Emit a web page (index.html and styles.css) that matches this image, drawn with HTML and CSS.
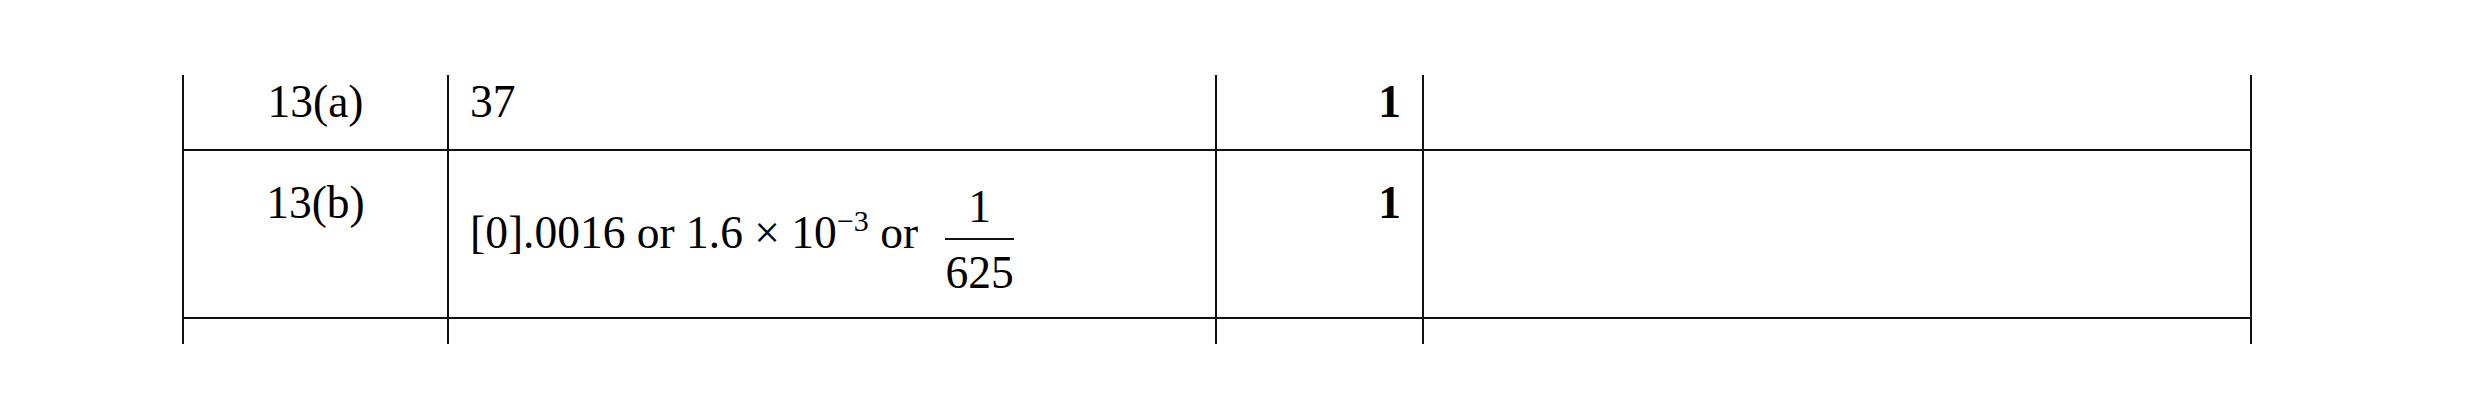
FILE: index.html
```
<!DOCTYPE html>
<html>
<head>
<meta charset="utf-8">
<link rel="stylesheet" href="styles.css">
</head>
<body>
<div class="sheet">
  <div class="grid">
    <div class="cell q r1">13(a)</div>
    <div class="cell ans r1">37</div>
    <div class="cell mk r1">1</div>
    <div class="cell gd r1"></div>

    <div class="cell q r2">13(b)</div>
    <div class="cell ans r2">[0].0016 or 1.6 × 10<sup class="sup">−3</sup> or <span class="frac"><span class="num">1</span><span class="den">625</span></span></div>
    <div class="cell mk r2">1</div>
    <div class="cell gd r2"></div>

    <div class="cell q r3"></div>
    <div class="cell ans r3"></div>
    <div class="cell mk r3"></div>
    <div class="cell gd r3"></div>
  </div>
</div>
</body>
</html>
```

FILE: styles.css
```
html, body {
  margin: 0;
  padding: 0;
  background: #fff;
}

body {
  font-family: "Liberation Serif", "Times New Roman", serif;
  font-size: 45.5px;
  color: #000;
}

.sheet {
  padding: 75px 0 0 182px;
}

.grid {
  display: grid;
  grid-template-columns: 265px 768px 207px 830px;
  grid-template-rows: 76px 168px 25px;
}

.cell {
  box-sizing: border-box;
  border-left: 2px solid #111;
  border-bottom: 2px solid #111;
  line-height: 50px;
  white-space: nowrap;
}

.r1 { padding-top: 2px; }
.r2 { padding-top: 27px; }
.r3 { border-bottom: none; }

.q { text-align: center; }
.ans { padding-left: 21px; }
.mk { text-align: right; padding-right: 21px; font-weight: bold; }
.gd { border-right: 2px solid #111; }

.sup {
  font-size: 30px;
  line-height: 0;
  vertical-align: 17px;
}

.frac {
  display: inline-block;
  vertical-align: -40px;
  margin-left: 10px;
  padding: 0 6px;
  text-align: center;
}

.num {
  display: block;
  padding: 4px 0 6px;
  line-height: 50px;
}

.den {
  display: block;
  border-top: 2px solid #111;
  padding-top: 8px;
  line-height: 50px;
}
```
